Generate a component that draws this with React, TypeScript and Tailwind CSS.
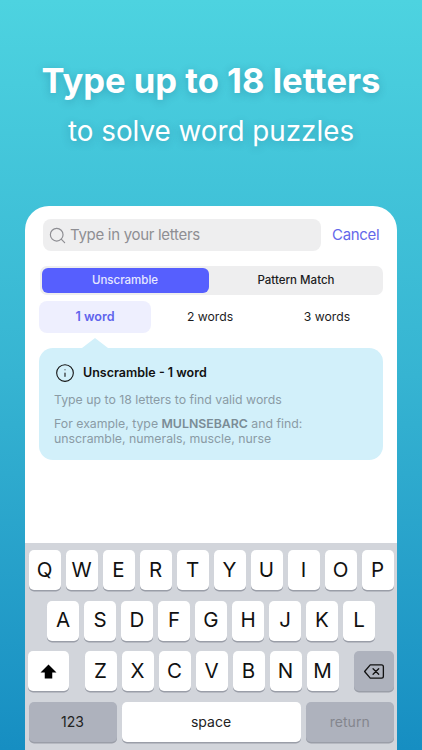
import { Info, Search } from "lucide-react";

const row1 = ["Q", "W", "E", "R", "T", "Y", "U", "I", "O", "P"];
const row2 = ["A", "S", "D", "F", "G", "H", "J", "K", "L"];
const row3 = ["Z", "X", "C", "V", "B", "N", "M"];

const keyShadow = "shadow-[0_1.5px_0_#9a9ea8]";

function Key({ label }: { label: string }) {
  return (
    <div
      className={`flex h-[40px] w-[32px] items-center justify-center rounded-[5px] bg-white text-[20.5px] leading-none text-[#111] ${keyShadow}`}
    >
      {label}
    </div>
  );
}

export default function App() {
  return (
    <div className="flex h-[750px] w-[422px] flex-col overflow-hidden bg-gradient-to-b from-[#4dd3e0] via-[#36b4d2] to-[#168ec2] font-['Inter','Liberation_Sans',sans-serif]">
      {/* Headline */}
      <div className="flex h-[206px] flex-col items-center pt-[59px] text-white [text-shadow:0_2px_8px_rgba(0,60,90,0.25)]">
        <h1 className="text-[34.6px] leading-[42px] font-bold">Type up to 18 letters</h1>
        <p className="mt-[13px] text-[27.8px] leading-[34px] font-normal">to solve word puzzles</p>
      </div>

      {/* Phone card */}
      <div className="mx-[25px] flex flex-1 flex-col overflow-hidden rounded-t-[24px] bg-white">
        <div className="flex-1 px-[14px] pt-[13px]">
          {/* Search */}
          <div className="flex items-center pl-[4px]">
            <div className="flex h-[32px] w-[278px] items-center gap-[3px] rounded-[8px] bg-[#eeeeef] pl-[5px] text-[#8e8e93]">
              <Search size={19} strokeWidth={1.5} />
              <span className="text-[15px] tracking-[-0.3px]">Type in your letters</span>
            </div>
            <span className="ml-[11px] text-[15px] tracking-[-0.3px] text-[#6468ea]">Cancel</span>
          </div>

          {/* Mode switch */}
          <div className="mt-[15px] ml-[1px] flex h-[29px] w-[343px] items-center rounded-[7px] bg-[#eeeeef] p-[1.5px] pt-[2px] text-[11.5px] font-medium">
            <div className="flex h-[25px] w-[167px] items-center justify-center rounded-[6px] bg-[#565ffe] text-[#e6e8ff]">
              Unscramble
            </div>
            <div className="flex-1 pl-[2px] text-center text-[#1c1c1e]">Pattern Match</div>
          </div>

          {/* Word count tabs */}
          <div className="mt-[6px] flex h-[32px] text-[12.2px] font-normal">
            <div className="flex w-[112px] items-center justify-center rounded-[8px] bg-[#eeeffe] pt-[1px] text-[12.6px] font-semibold text-[#5f64ec]">
              1 word
            </div>
            <div className="flex w-[116px] items-center justify-center pt-[1px] pl-[2px] text-[#1c1c1e]">2 words</div>
            <div className="flex w-[116px] items-center justify-center pt-[1px] pl-[4px] text-[#1c1c1e]">3 words</div>
          </div>

          {/* Info box */}
          <div className="relative mt-[15px] h-[112px] w-[344px] rounded-[14px] bg-[#d2f0fa] px-[15px] pt-[15px]">
            <div className="absolute -top-[10px] left-[43px] h-0 w-0 border-x-[13px] border-b-[10px] border-x-transparent border-b-[#d2f0fa]" />
            <div className="flex items-center gap-[8px] pl-[1px]">
              <Info size={20} strokeWidth={1.3} className="text-[#111]" />
              <span className="text-[12.5px] font-semibold text-[#111]">Unscramble - 1 word</span>
            </div>
            <p className="mt-[9px] text-[12.3px] leading-[16px] text-[#8a9ba5]">Type up to 18 letters to find valid words</p>
            <p className="mt-[8px] text-[12.3px] leading-[15px] text-[#8a9ba5]">
              For example, type <b className="font-semibold text-[#7a8c96]">MULNSEBARC</b> and find:
              <br />
              unscramble, numerals, muscle, nurse
            </p>
          </div>
        </div>

        {/* Keyboard */}
        <div className="flex h-[207px] flex-col gap-[10.5px] bg-[#d2d5db] pt-[7px] text-[#111]">
          <div className="flex justify-center gap-[5px]">
            {row1.map((k) => (
              <Key key={k} label={k} />
            ))}
          </div>
          <div className="flex justify-center gap-[5px]">
            {row2.map((k) => (
              <Key key={k} label={k} />
            ))}
          </div>
          <div className="flex items-center justify-between px-[3px]">
            <div className={`flex h-[40px] w-[41px] items-center justify-center rounded-[5px] bg-white ${keyShadow}`}>
              <svg width="17" height="15" viewBox="0 0 18 16">
                <path d="M9 .5 17.5 9H13v6.5H5V9H.5Z" fill="#000" />
              </svg>
            </div>
            <div className="flex gap-[5px]">
              {row3.map((k) => (
                <Key key={k} label={k} />
              ))}
            </div>
            <div className={`flex h-[40px] w-[40px] items-center justify-center rounded-[5px] bg-[#aeb2bd] ${keyShadow}`}>
              <svg width="22" height="15" viewBox="0 0 22 16" fill="none" stroke="#111" strokeWidth="1.4" strokeLinejoin="round" strokeLinecap="round">
                <path d="M7 1h12a2 2 0 0 1 2 2v10a2 2 0 0 1-2 2H7L1 8Z" />
                <path d="m10 5 6 6M16 5l-6 6" />
              </svg>
            </div>
          </div>
          <div className="flex items-center gap-[5px] pr-[3px] pl-[3.5px] text-[14px]">
            <div className={`flex h-[40px] w-[88px] items-center justify-center rounded-[5px] bg-[#aeb2bd] text-[#222] ${keyShadow}`}>123</div>
            <div className={`flex h-[40px] w-[179px] items-center justify-center rounded-[5px] bg-white text-[#222] ${keyShadow}`}>space</div>
            <div className={`flex h-[40px] flex-1 items-center justify-center rounded-[5px] bg-[#aeb2bd] text-[#84868e] ${keyShadow}`}>return</div>
          </div>
        </div>
      </div>
    </div>
  );
}
